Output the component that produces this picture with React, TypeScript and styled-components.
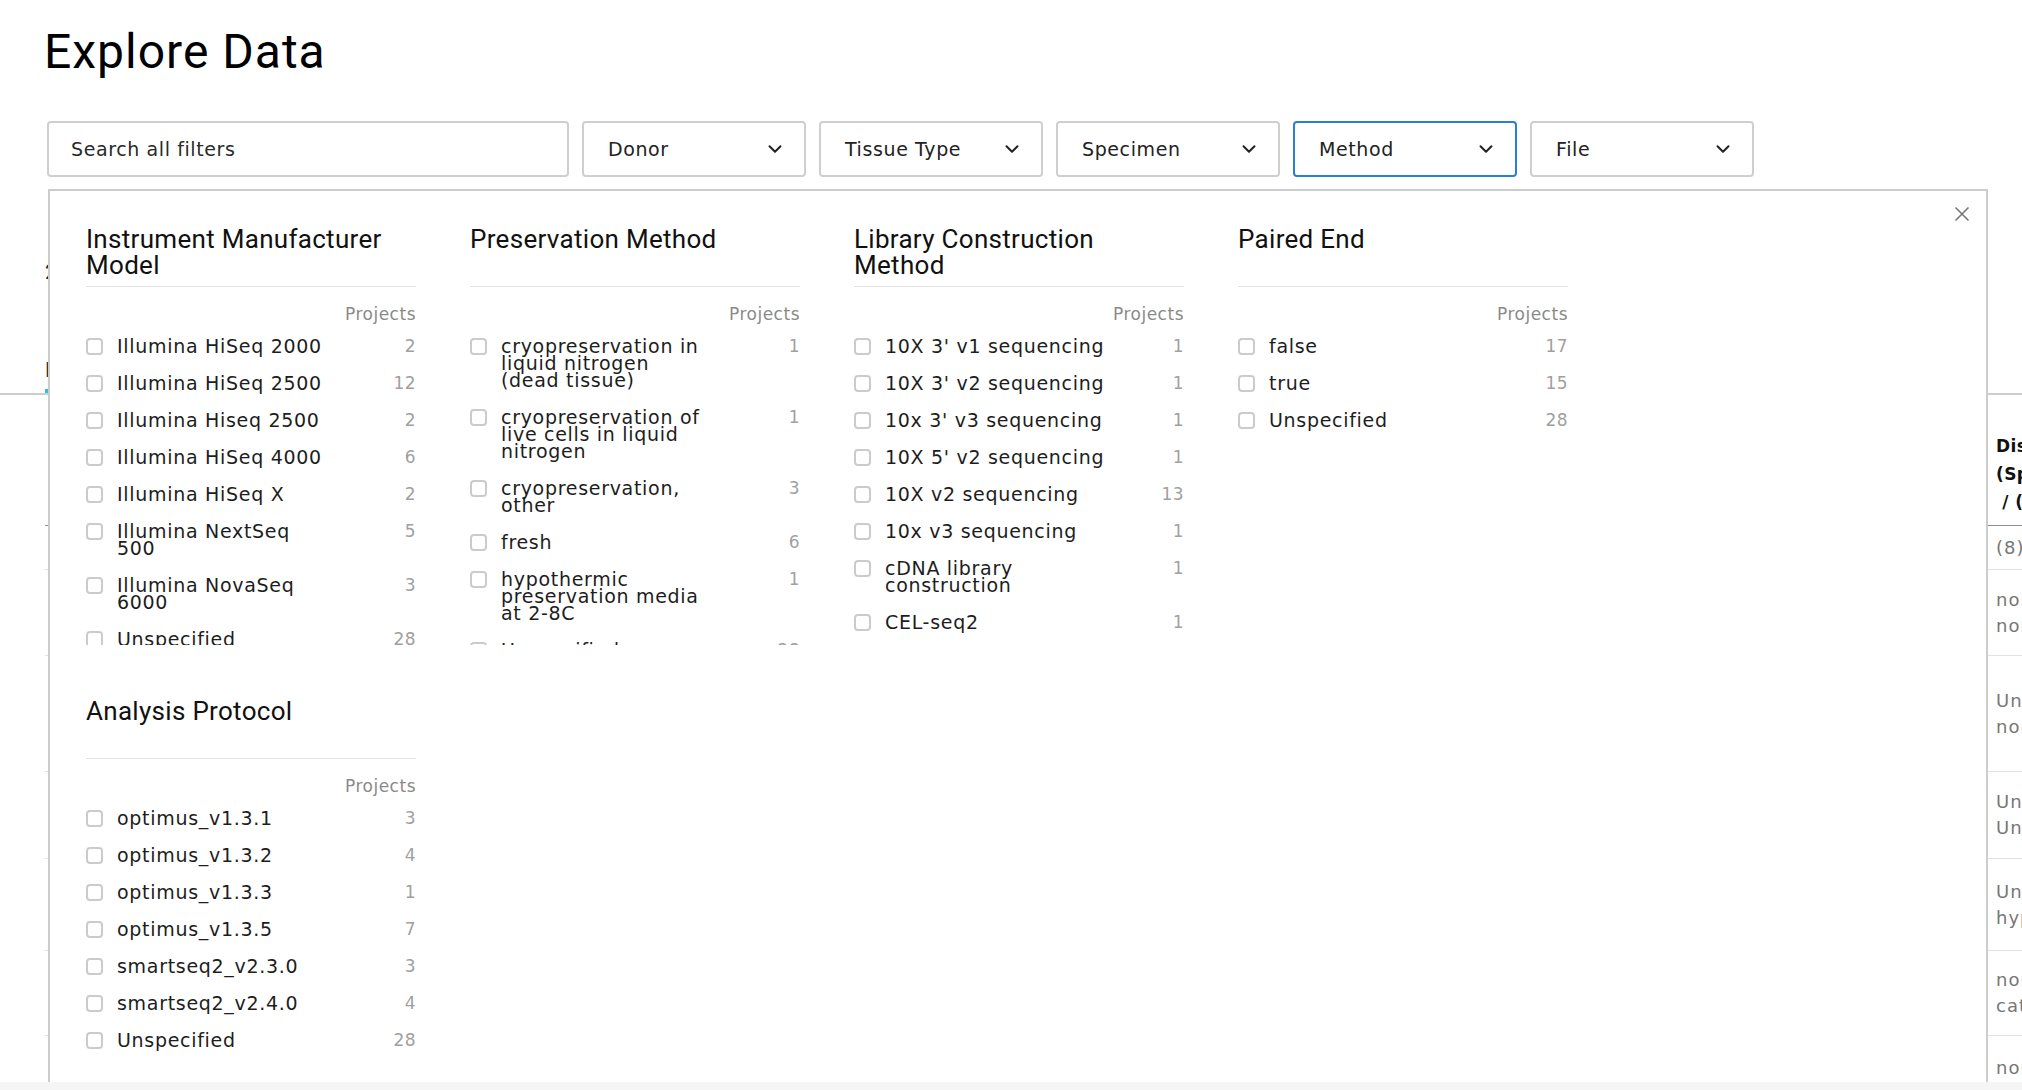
import React from "react";
import styled, { createGlobalStyle } from "styled-components";
import { ChevronDown } from "lucide-react";

const SANS = `"DejaVu Sans", Verdana, sans-serif`;
const DIN = `Roboto, "Liberation Sans", sans-serif`;

const GlobalStyle = createGlobalStyle`
  html, body { margin: 0; padding: 0; background: #f5f5f5; overflow: hidden; }
  body { font-family: ${SANS}; color: #1d1d1d; }
  *, *::before, *::after { box-sizing: border-box; }
`;

type Item = { label: string; count: number };
type Facet = { title: string; items: Item[] };

const facets: Facet[] = [
  {
    title: "Instrument Manufacturer Model",
    items: [
      { label: "Illumina HiSeq 2000", count: 2 },
      { label: "Illumina HiSeq 2500", count: 12 },
      { label: "Illumina Hiseq 2500", count: 2 },
      { label: "Illumina HiSeq 4000", count: 6 },
      { label: "Illumina HiSeq X", count: 2 },
      { label: "Illumina NextSeq\n500", count: 5 },
      { label: "Illumina NovaSeq\n6000", count: 3 },
      { label: "Unspecified", count: 28 },
    ],
  },
  {
    title: "Preservation Method",
    items: [
      { label: "cryopreservation in\nliquid nitrogen\n(dead tissue)", count: 1 },
      { label: "cryopreservation of\nlive cells in liquid\nnitrogen", count: 1 },
      { label: "cryopreservation,\nother", count: 3 },
      { label: "fresh", count: 6 },
      { label: "hypothermic\npreservation media\nat 2-8C", count: 1 },
      { label: "Unspecified", count: 28 },
    ],
  },
  {
    title: "Library Construction Method",
    items: [
      { label: "10X 3' v1 sequencing", count: 1 },
      { label: "10X 3' v2 sequencing", count: 1 },
      { label: "10x 3' v3 sequencing", count: 1 },
      { label: "10X 5' v2 sequencing", count: 1 },
      { label: "10X v2 sequencing", count: 13 },
      { label: "10x v3 sequencing", count: 1 },
      { label: "cDNA library\nconstruction", count: 1 },
      { label: "CEL-seq2", count: 1 },
      { label: "Drop-seq", count: 2 },
      { label: "Smart-seq2", count: 9 },
      { label: "Unspecified", count: 28 },
    ],
  },
  {
    title: "Paired End",
    items: [
      { label: "false", count: 17 },
      { label: "true", count: 15 },
      { label: "Unspecified", count: 28 },
    ],
  },
  {
    title: "Analysis Protocol",
    items: [
      { label: "optimus_v1.3.1", count: 3 },
      { label: "optimus_v1.3.2", count: 4 },
      { label: "optimus_v1.3.3", count: 1 },
      { label: "optimus_v1.3.5", count: 7 },
      { label: "smartseq2_v2.3.0", count: 3 },
      { label: "smartseq2_v2.4.0", count: 4 },
      { label: "Unspecified", count: 28 },
    ],
  },
];

const dropdowns = [
  { label: "Donor", active: false },
  { label: "Tissue Type", active: false },
  { label: "Specimen", active: false },
  { label: "Method", active: true },
  { label: "File", active: false },
];

const tableRows: { h: number; lines: string[] }[] = [
  { h: 44, lines: ["(8)"] },
  { h: 86, lines: ["normal /", "normal"] },
  { h: 116, lines: ["Unspecified /", "normal"] },
  { h: 87, lines: ["Unspecified /", "Unspecified"] },
  { h: 92, lines: ["Unspecified /", "hypertension"] },
  { h: 85, lines: ["normal /", "cataract"] },
  { h: 90, lines: ["normal /", "normal"] },
];

/* ---------- page ---------- */

const Page = styled.div`
  position: relative;
  height: 1082px;
  overflow: hidden;
  background: #fff;
  padding: 24px 47px 0;
`;

const Title = styled.h1`
  margin: 0 0 0 -3px;
  font-family: ${DIN};
  font-weight: 400;
  font-size: 48px;
  line-height: 56px;
  letter-spacing: 1px;
  color: #000;
`;

const FilterBar = styled.div`
  display: flex;
  gap: 13px;
  margin-top: 41px;
`;

const SearchInput = styled.input`
  width: 522px;
  height: 56px;
  border: 2px solid #cfcfcf;
  border-radius: 4px;
  padding: 0 22px;
  font-family: ${SANS};
  font-size: 19px;
  letter-spacing: 0.6px;
  color: #222;
  outline: none;
  background: #fff;
  &::placeholder {
    color: #2a2a2a;
    opacity: 1;
  }
`;

const Dropdown = styled.button<{ $active?: boolean }>`
  width: 224px;
  height: 56px;
  display: flex;
  align-items: center;
  justify-content: space-between;
  padding: 0 18px 0 24px;
  border: 2px solid ${(p) => (p.$active ? "#2a7fd1" : "#cfcfcf")};
  border-radius: 4px;
  background: #fff;
  font-family: ${SANS};
  font-size: 19px;
  letter-spacing: 0.6px;
  color: #222;
  cursor: pointer;
`;

/* ---------- background content (behind the open menu) ---------- */

const Summary = styled.div`
  margin: 83px 0 0 -2px;
  display: flex;
  gap: 40px;
  font-family: ${DIN};
  font-size: 21px;
  line-height: 24px;
  color: #222;
`;

const TabsBar = styled.div`
  margin: 74px -47px 0;
  padding: 0 47px;
  display: flex;
  gap: 32px;
  border-bottom: 2px solid #cdcdcd;
`;

const Tab = styled.div<{ $active?: boolean }>`
  margin-left: -2px;
  font-family: ${DIN};
  font-size: 21px;
  line-height: 24px;
  padding-bottom: 7px;
  color: ${(p) => (p.$active ? "#333" : "#777")};
  border-bottom: 4px solid ${(p) => (p.$active ? "#28c0e8" : "transparent")};
`;

const TableWrap = styled.div`
  margin: 0 -47px 0 -2px;
  overflow: hidden;
`;

const TRow = styled.div<{ $head?: boolean }>`
  display: grid;
  grid-template-columns: 1941px 320px;
  width: max-content;
  border-bottom: 1px solid ${(p) => (p.$head ? "#8d8d8d" : "#e2e2e2")};
`;

const TCell = styled.div<{ $head?: boolean }>`
  display: flex;
  flex-direction: column;
  justify-content: ${(p) => (p.$head ? "flex-end" : "center")};
  padding: 0 10px ${(p) => (p.$head ? "9px" : "0")};
  font-family: ${SANS};
  font-size: ${(p) => (p.$head ? "17px" : "18px")};
  font-weight: ${(p) => (p.$head ? 700 : 400)};
  line-height: ${(p) => (p.$head ? "28px" : "26px")};
  letter-spacing: ${(p) => (p.$head ? "0.4px" : "1px")};
  color: ${(p) => (p.$head ? "#111" : "#777")};
  white-space: pre;
`;

/* ---------- filter menu ---------- */

const Menu = styled.div`
  position: absolute;
  top: 189px;
  left: 48px;
  width: 1940px;
  height: 1000px;
  background: #fff;
  border: 2px solid #cccccc;
  padding: 35px 0 0 36px;
`;

const CloseButton = styled.button`
  position: absolute;
  top: 15px;
  right: 16px;
  width: 16px;
  height: 16px;
  padding: 0;
  border: 0;
  background: none;
  cursor: pointer;
  display: flex;
`;

const FacetGrid = styled.div`
  display: grid;
  grid-template-columns: repeat(4, 330px);
  column-gap: 54px;
  row-gap: 53px;
  align-items: start;
`;

const FacetTitle = styled.h3`
  margin: 0;
  max-width: 310px;
  min-height: 52px;
  font-family: ${DIN};
  font-weight: 400;
  font-size: 26px;
  line-height: 26px;
  letter-spacing: 0.3px;
  color: #111;
`;

const Divider = styled.div`
  margin-top: 8px;
  height: 1px;
  background: #e3e3e3;
`;

const CountHeader = styled.div`
  margin-top: 17px;
  text-align: right;
  font-size: 17px;
  line-height: 20px;
  letter-spacing: 0.5px;
  color: #8a8a8a;
`;

const TermList = styled.ul`
  list-style: none;
  margin: 4px 0 0;
  padding: 0;
  max-height: 317px;
  overflow: hidden;
`;

const Term = styled.li`
  display: flex;
  align-items: flex-start;
  padding: 10px 0;
`;

const Checkbox = styled.span`
  flex: none;
  width: 17px;
  height: 17px;
  margin-right: 14px;
  border: 2px solid #cbcbcb;
  border-radius: 4px;
`;

const TermLabel = styled.span`
  flex: 0 0 230px;
  white-space: pre-line;
  font-size: 19px;
  line-height: 17px;
  letter-spacing: 0.7px;
  color: #1d1d1d;
`;

const TermCount = styled.span`
  flex: 1;
  text-align: right;
  font-size: 17px;
  line-height: 17px;
  letter-spacing: 0.4px;
  color: #a0a0a0;
`;

function FacetSection({ facet }: { facet: Facet }) {
  return (
    <section>
      <FacetTitle>{facet.title}</FacetTitle>
      <Divider />
      <CountHeader>Projects</CountHeader>
      <TermList>
        {facet.items.map((it) => (
          <Term key={it.label}>
            <Checkbox />
            <TermLabel>{it.label}</TermLabel>
            <TermCount>{it.count}</TermCount>
          </Term>
        ))}
      </TermList>
    </section>
  );
}

export default function App() {
  return (
    <>
      <GlobalStyle />
      <Page>
        <Title>Explore Data</Title>
        <FilterBar>
          <SearchInput placeholder="Search all filters" />
          {dropdowns.map((d) => (
            <Dropdown key={d.label} $active={d.active}>
              <span>{d.label}</span>
              <ChevronDown size={22} strokeWidth={2.2} color="#222" />
            </Dropdown>
          ))}
        </FilterBar>

        <Summary>
          <span>27 Projects</span>
          <span>1,406 Specimens</span>
          <span>2.6M Estimated Cells</span>
        </Summary>
        <TabsBar>
          <Tab $active>Projects</Tab>
          <Tab>Samples</Tab>
          <Tab>Files</Tab>
        </TabsBar>
        <TableWrap>
          <TRow $head style={{ height: 131 }}>
            <TCell $head />
            <TCell $head>{"Disease\n(Specimen)\n / (Donor)"}</TCell>
          </TRow>
          {tableRows.map((r, i) => (
            <TRow key={i} style={{ height: r.h }}>
              <TCell />
              <TCell>{r.lines.join("\n")}</TCell>
            </TRow>
          ))}
        </TableWrap>

        <Menu>
          <CloseButton aria-label="Close">
            <svg width="16" height="16" viewBox="0 0 16 16">
              <path d="M1.5 1.5 L14.5 14.5 M14.5 1.5 L1.5 14.5" stroke="#777" strokeWidth="1.6" fill="none" />
            </svg>
          </CloseButton>
          <FacetGrid>
            {facets.map((f) => (
              <FacetSection key={f.title} facet={f} />
            ))}
          </FacetGrid>
        </Menu>
      </Page>
    </>
  );
}
